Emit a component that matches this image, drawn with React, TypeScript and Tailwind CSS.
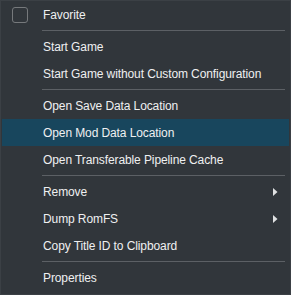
import React from "react";

type Entry =
  | { kind: "sep" }
  | { kind: "item"; label: string; active?: boolean; submenu?: boolean; checkbox?: boolean };

const entries: Entry[] = [
  { kind: "item", label: "Favorite", checkbox: true },
  { kind: "sep" },
  { kind: "item", label: "Start Game" },
  { kind: "item", label: "Start Game without Custom Configuration" },
  { kind: "sep" },
  { kind: "item", label: "Open Save Data Location" },
  { kind: "item", label: "Open Mod Data Location", active: true },
  { kind: "item", label: "Open Transferable Pipeline Cache" },
  { kind: "sep" },
  { kind: "item", label: "Remove", submenu: true },
  { kind: "item", label: "Dump RomFS", submenu: true },
  { kind: "item", label: "Copy Title ID to Clipboard" },
  { kind: "sep" },
  { kind: "item", label: "Properties" },
];

export default function App() {
  return (
    <div
      className="w-[291px] h-[295px] overflow-hidden bg-[#31363b] border border-[#3b4045] px-px text-[12px] tracking-[-0.1px] text-[#eff0f1]"
      style={{ fontFamily: '"Liberation Sans", Arial, sans-serif' }}
    >
      {entries.map((e, i) =>
        e.kind === "sep" ? (
          <div key={i} className="h-[5px] pt-[2px] pl-[40px] pr-[4px]">
            <div className="h-px bg-[#5c6065]" />
          </div>
        ) : (
          <div
            key={i}
            className={`relative h-[27px] flex items-center pl-[41px] pt-px ${e.active ? "bg-[#18465d]" : ""}`}
          >
            {e.checkbox && (
              <span className="absolute left-[10px] top-[6px] w-[16px] h-[16px] rounded-[3px] border border-[#76797c]" />
            )}
            <span>{e.label}</span>
            {e.submenu && (
              <svg className="absolute left-[271px] top-[10px]" width="5" height="8" viewBox="0 0 5 8">
                <path d="M0 0 L4.5 4 L0 8 Z" fill="#dfe1e2" />
              </svg>
            )}
          </div>
        )
      )}
    </div>
  );
}
